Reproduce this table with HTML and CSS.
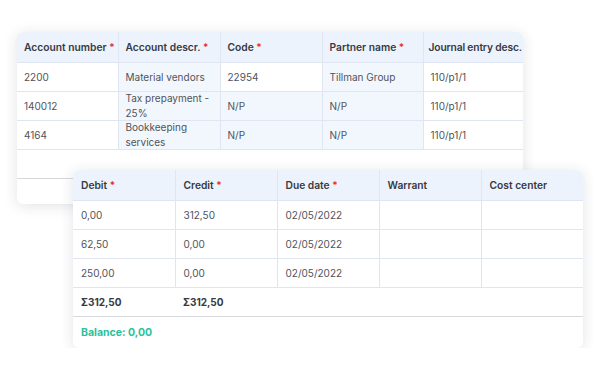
FILE: index.html
```html
<!DOCTYPE html>
<html>
<head>
  <title>Journal entries</title>
  <link rel="stylesheet" href="styles.css">
</head>
<body>
  <div class="scene">
    <div class="card card-back">
      <table class="grid grid-back">
        <colgroup>
          <col style="width:101px"><col style="width:102px"><col style="width:102px"><col style="width:101px"><col style="width:100px">
        </colgroup>
        <thead>
          <tr>
            <th>Account number <span class="req">*</span></th>
            <th>Account descr. <span class="req">*</span></th>
            <th>Code <span class="req">*</span></th>
            <th>Partner name <span class="req">*</span></th>
            <th class="th-tight">Journal entry desc.</th>
          </tr>
        </thead>
        <tbody>
          <tr>
            <td><div class="cell">2200</div></td>
            <td class="tint"><div class="cell">Material vendors</div></td>
            <td><div class="cell">22954</div></td>
            <td class="tint"><div class="cell">Tillman Group</div></td>
            <td><div class="cell">110/p1/1</div></td>
          </tr>
          <tr>
            <td><div class="cell">140012</div></td>
            <td class="tint"><div class="cell">Tax prepayment - 25%</div></td>
            <td class="tint"><div class="cell">N/P</div></td>
            <td class="tint"><div class="cell">N/P</div></td>
            <td><div class="cell">110/p1/1</div></td>
          </tr>
          <tr>
            <td><div class="cell">4164</div></td>
            <td class="tint"><div class="cell">Bookkeeping services</div></td>
            <td class="tint"><div class="cell">N/P</div></td>
            <td class="tint"><div class="cell">N/P</div></td>
            <td><div class="cell">110/p1/1</div></td>
          </tr>
          <tr class="row-blank">
            <td colspan="5"><div class="cell"></div></td>
          </tr>
        </tbody>
      </table>
      <div class="card-foot"></div>
    </div>

    <div class="card card-front">
      <table class="grid">
        <colgroup>
          <col style="width:102px"><col style="width:102px"><col style="width:102px"><col style="width:102px"><col style="width:102px">
        </colgroup>
        <thead>
          <tr>
            <th>Debit <span class="req">*</span></th>
            <th>Credit <span class="req">*</span></th>
            <th>Due date <span class="req">*</span></th>
            <th>Warrant</th>
            <th>Cost center</th>
          </tr>
        </thead>
        <tbody>
          <tr>
            <td><div class="cell">0,00</div></td>
            <td><div class="cell">312,50</div></td>
            <td><div class="cell">02/05/2022</div></td>
            <td><div class="cell"></div></td>
            <td><div class="cell"></div></td>
          </tr>
          <tr>
            <td><div class="cell">62,50</div></td>
            <td><div class="cell">0,00</div></td>
            <td><div class="cell">02/05/2022</div></td>
            <td><div class="cell"></div></td>
            <td><div class="cell"></div></td>
          </tr>
          <tr>
            <td><div class="cell">250,00</div></td>
            <td><div class="cell">0,00</div></td>
            <td><div class="cell">02/05/2022</div></td>
            <td><div class="cell"></div></td>
            <td><div class="cell"></div></td>
          </tr>
          <tr class="row-total">
            <td><div class="cell">Σ312,50</div></td>
            <td><div class="cell">Σ312,50</div></td>
            <td><div class="cell"></div></td>
            <td><div class="cell"></div></td>
            <td><div class="cell"></div></td>
          </tr>
        </tbody>
      </table>
      <div class="card-foot balance">Balance: 0,00</div>
    </div>
  </div>
</body>
</html>
```
FILE: styles.css
```css
:root {
  --head-bg: #edf3fc;
  --tint-bg: #f2f7fd;
  --line: #dfe5f1;
  --line-strong: #d6d8dc;
  --text: #50535b;
  --head-text: #363a43;
  --req: #ee2a2a;
  --green: #2cc19c;
}

body {
  margin: 0;
  background: #ffffff;
  font-family: 'Inter', 'Noto Sans', Arial, sans-serif;
  color: var(--text);
}

.scene {
  padding-top: 32px;
}

.card {
  background: #ffffff;
  border-radius: 6px;
  box-shadow: 0 2px 14px rgba(30, 40, 70, 0.13);
  overflow: hidden;
}

.card-back {
  width: 506px;
  margin-left: 17px;
}

.card-front {
  position: relative; /* paint above the back card */
  width: 510px;
  margin: -34px 0 0 73px;
}

.grid {
  border-collapse: collapse;
  table-layout: fixed;
  width: 100%;
}

.grid th {
  height: 30px;
  padding: 0 7px;
  background: var(--head-bg);
  color: var(--head-text);
  font-size: 10.25px;
  font-weight: 600;
  text-align: left;
  white-space: nowrap;
  border-right: 1px solid var(--line);
  border-bottom: 1px solid var(--line);
}

.grid th.th-tight {
  padding: 0 0 0 5px;
  letter-spacing: -0.15px;
}

.grid td {
  padding: 0;
  font-size: 10px;
  border-right: 1px solid var(--line);
  border-bottom: 1px solid var(--line);
}

.grid th:last-child,
.grid td:last-child {
  border-right: none;
}

.grid td.tint {
  background: var(--tint-bg);
}

.cell {
  height: 28px;
  padding: 0 7px;
  display: flex;
  align-items: center;
  line-height: 15px;
}

.card-front .cell {
  padding: 0 8px;
}

.card-front th {
  padding: 0 8px;
}

.grid-back .row-blank td {
  border-bottom: 1px solid var(--line-strong);
}

.row-total td {
  border-right: none;
  border-bottom: 1px solid var(--line-strong);
  font-weight: 700;
  color: var(--head-text);
}

.req {
  color: var(--req);
  font-size: 10px;
}

.card-foot {
  height: 25px;
}

.balance {
  height: 31px;
  padding: 0 8px;
  display: flex;
  align-items: center;
  color: var(--green);
  font-size: 10.5px;
  font-weight: 700;
}
```
